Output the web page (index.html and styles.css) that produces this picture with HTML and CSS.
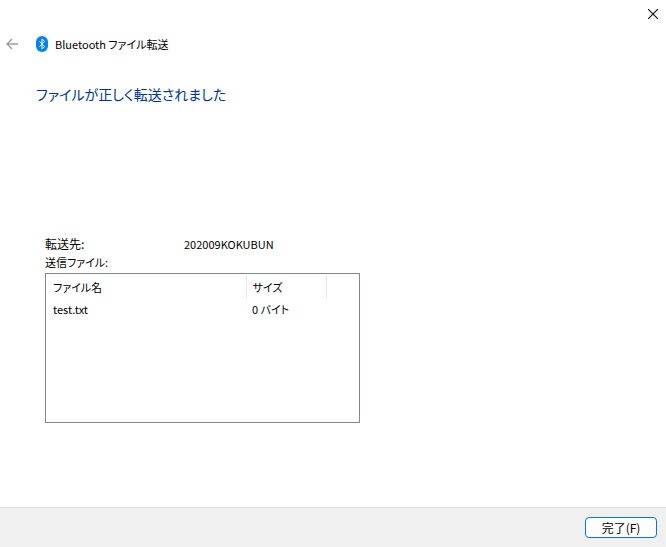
FILE: index.html
```
<!DOCTYPE html>
<html lang="ja">
<head>
    <meta charset="UTF-8">
    <meta name="viewport" content="width=device-width, initial-scale=1.0">
    <title>Bluetooth ファイル転送</title>
    <link rel="stylesheet" href="styles.css">
</head>
<body>
    <div class="window">
        <!-- タイトルバー -->
        <div class="titlebar">
            <button class="close" type="button" aria-label="閉じる">
                <svg width="10" height="10" viewBox="0 0 10 10"><path d="M0 0L10 10M10 0L0 10" stroke="#111" stroke-width="1.2"/></svg>
            </button>
        </div>

        <header class="header">
            <button class="back" type="button" aria-label="戻る" disabled>
                <svg width="12" height="12" viewBox="0 0 12 12" fill="none" stroke="#a0a0a0" stroke-width="1.5"><path d="M12 6H1M6 1L1 6L6 11"/></svg>
            </button>
            <svg class="logo" width="12" height="16" viewBox="0 0 12 16">
                <rect width="12" height="16" rx="6" fill="#0082fc"/>
                <path d="M3.4 5.4L8.6 10.6L6 13V3L8.6 5.4L3.4 10.6" fill="none" stroke="#fff" stroke-width="1"/>
            </svg>
            <span class="app-name">Bluetooth ファイル転送</span>
        </header>

        <!-- 転送結果 -->
        <main class="content">
            <h1>ファイルが正しく転送されました</h1>
            <div class="details">
                <dl class="target">
                    <dt>転送先:</dt>
                    <dd>202009KOKUBUN</dd>
                </dl>
                <div id="files-label">送信ファイル:</div>
                <div class="file-list">
                    <table aria-labelledby="files-label">
                        <thead>
                            <tr>
                                <th class="name">ファイル名</th>
                                <th class="size">サイズ</th>
                                <th aria-hidden="true"></th>
                            </tr>
                        </thead>
                        <tbody>
                            <tr>
                                <td>test.txt</td>
                                <td>0 バイト</td>
                                <td></td>
                            </tr>
                        </tbody>
                    </table>
                </div>
            </div>
        </main>

        <footer class="footer">
            <button class="finish" type="button">完了(F)</button>
        </footer>
    </div>
</body>
</html>
```
FILE: styles.css
```
* {
    box-sizing: border-box;
}

body {
    margin: 0;
    background-color: #fff;
    color: #000;
    font-family: "Noto Sans CJK JP", sans-serif;
    font-size: 11px;
    line-height: 18px;
    font-feature-settings: "palt";
}

button {
    font: inherit;
    color: inherit;
}

.window {
    display: flex;
    flex-direction: column;
    min-height: 100vh;
}

.titlebar {
    display: flex;
    justify-content: flex-end;
    height: 28px;
}

.close, .back {
    display: flex;
    align-items: center;
    justify-content: center;
    padding: 0;
    border: none;
    background: none;
}

.close {
    width: 26px;
}

.header {
    display: flex;
    align-items: center;
    height: 32px;
}

.back {
    width: 24px;
    height: 24px;
}

.logo {
    margin: 0 7px 0 12px;
}

.content {
    flex: 1;
    padding: 22px 36px;
}

h1 {
    margin: 0;
    color: #003399;
    font-size: 14px;
    font-weight: normal;
    line-height: 24px;
}

.details {
    max-width: 324px;
    margin-top: 129px;
    padding-left: 9px;
}

.target {
    display: flex;
    margin: 0;
}

.target dt {
    width: 139px;
    font-size: 12px;
}

.target dd {
    margin: 0;
}

.file-list {
    height: 150px;
    margin-top: 2px;
    padding-top: 1px;
    border: 1px solid #828790;
}

table {
    width: 100%;
    border-collapse: collapse;
    table-layout: fixed;
}

th, td {
    padding: 0 6px;
    font-weight: normal;
    text-align: left;
}

th:first-child, td:first-child {
    padding-left: 7px;
}

th {
    height: 24px;
    border-right: 1px solid #e5e5e5;
}

th:last-child {
    border-right: none;
}

td {
    height: 20px;
}

.name {
    width: 200px;
}

.size {
    width: 80px;
}

.footer {
    display: flex;
    align-items: center;
    justify-content: flex-end;
    height: 40px;
    padding: 0 9px;
    border-top: 1px solid #dfdfdf;
    background-color: #f0f0f0;
}

.finish {
    width: 72px;
    height: 21px;
    padding: 0;
    border: 1px solid #0078d4;
    border-radius: 4px;
    background-color: #fdfdfd;
    font-size: 12px;
}
```
